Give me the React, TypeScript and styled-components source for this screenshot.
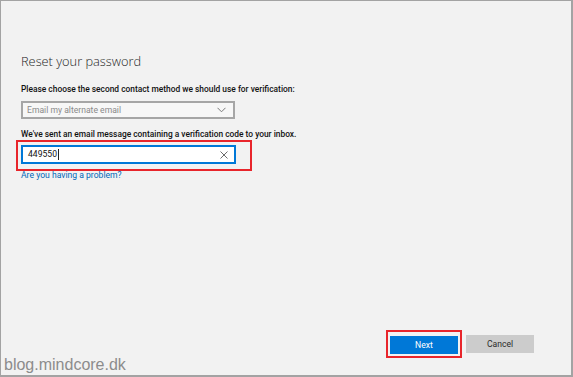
import React from 'react';
import styled, { createGlobalStyle } from 'styled-components';

const GlobalStyle = createGlobalStyle`
  html, body {
    margin: 0;
    padding: 0;
    background: #f2f2f2;
  }
  * {
    box-sizing: border-box;
  }
`;

const Frame = styled.div`
  position: relative;
  width: 573px;
  height: 377px;
  border: 1px solid #a3a3a3;
  border-width: 1px 2px 2px 1px;
  background: #f2f2f2;
  display: flex;
  flex-direction: column;
  font-family: Roboto, 'Open Sans', sans-serif;
  color: #1f1f1f;
`;

const Content = styled.div`
  flex: 1;
  padding: 52px 0 0 20px;
  display: flex;
  flex-direction: column;
  align-items: flex-start;
`;

const Title = styled.h1`
  margin: 0 0 15px;
  font-family: 'Open Sans', sans-serif;
  font-size: 12.8px;
  font-weight: 300;
  line-height: 16px;
  color: #262626;
`;

const Label = styled.label<{ $gap?: number }>`
  display: block;
  font-size: 8.4px;
  font-weight: 500;
  line-height: 11px;
  color: #111;
  margin-bottom: ${p => p.$gap ?? 0}px;
  white-space: nowrap;
`;

const SelectBox = styled.div`
  width: 214px;
  height: 18px;
  border: 2px solid #a6a6a6;
  background: #f7f7f7;
  display: flex;
  align-items: center;
  justify-content: space-between;
  padding: 0 7px 0 4px;
  font-size: 8.6px;
  color: #8a8a8a;
  margin-bottom: 10px;
`;

const FieldWrap = styled.div`
  width: 236px;
  margin-left: -5px;
  padding: 3px 15px 5px 3px;
  border: 2px solid #e8252b;
`;

const TextBox = styled.div`
  width: 215px;
  height: 19px;
  border: 2px solid #0078d7;
  background: #ffffff;
  display: flex;
  align-items: center;
  justify-content: space-between;
  padding: 0 6px 0 5px;
  font-size: 8.6px;
  color: #111;
`;

const Caret = styled.span`
  display: inline-block;
  width: 1px;
  height: 11px;
  background: #222;
  margin-left: 1px;
  vertical-align: middle;
`;

const Link = styled.a`
  margin-top: -1px;
  font-size: 8.6px;
  color: #0067b8;
  text-decoration: none;
  line-height: 11px;
`;

const Footer = styled.div`
  display: flex;
  justify-content: flex-end;
  align-items: center;
  gap: 4px;
  padding: 0 37px 17px 0;
`;

const Highlight = styled.div`
  padding: 1px 2px 2px;
  border: 2px solid #e8252b;
`;

const Button = styled.button<{ $primary?: boolean }>`
  width: 68px;
  height: 18px;
  border: none;
  padding: 0;
  font-family: Roboto, 'Open Sans', sans-serif;
  font-size: 8.6px;
  background: ${p => (p.$primary ? '#0078d7' : '#cccccc')};
  color: ${p => (p.$primary ? '#ffffff' : '#2b2b2b')};
`;

const Watermark = styled.div`
  position: absolute;
  left: 3px;
  bottom: 1px;
  font-family: 'Liberation Sans', Arial, sans-serif;
  font-size: 16px;
  color: #8c8c8c;
`;

const Chevron = () => (
  <svg width="9" height="6" viewBox="0 0 9 6">
    <path d="M0.5 0.8 L4.5 4.8 L8.5 0.8" fill="none" stroke="#7a7a7a" strokeWidth="1" />
  </svg>
);

const Clear = () => (
  <svg width="8" height="8" viewBox="0 0 8 8">
    <path d="M0.5 0.5 L7.5 7.5 M7.5 0.5 L0.5 7.5" fill="none" stroke="#6b6b6b" strokeWidth="1" />
  </svg>
);

export default function App() {
  return (
    <>
      <GlobalStyle />
      <Frame>
        <Content>
          <Title>Reset your password</Title>
          <Label $gap={6}>Please choose the second contact method we should use for verification:</Label>
          <SelectBox>
            <span>Email my alternate email</span>
            <Chevron />
          </SelectBox>
          <Label>We've sent an email message containing a verification code to your inbox.</Label>
          <FieldWrap>
            <TextBox>
              <span>
                449550
                <Caret />
              </span>
              <Clear />
            </TextBox>
          </FieldWrap>
          <Link href="#">Are you having a problem?</Link>
        </Content>
        <Footer>
          <Highlight>
            <Button $primary>Next</Button>
          </Highlight>
          <Button>Cancel</Button>
        </Footer>
        <Watermark>blog.mindcore.dk</Watermark>
      </Frame>
    </>
  );
}
